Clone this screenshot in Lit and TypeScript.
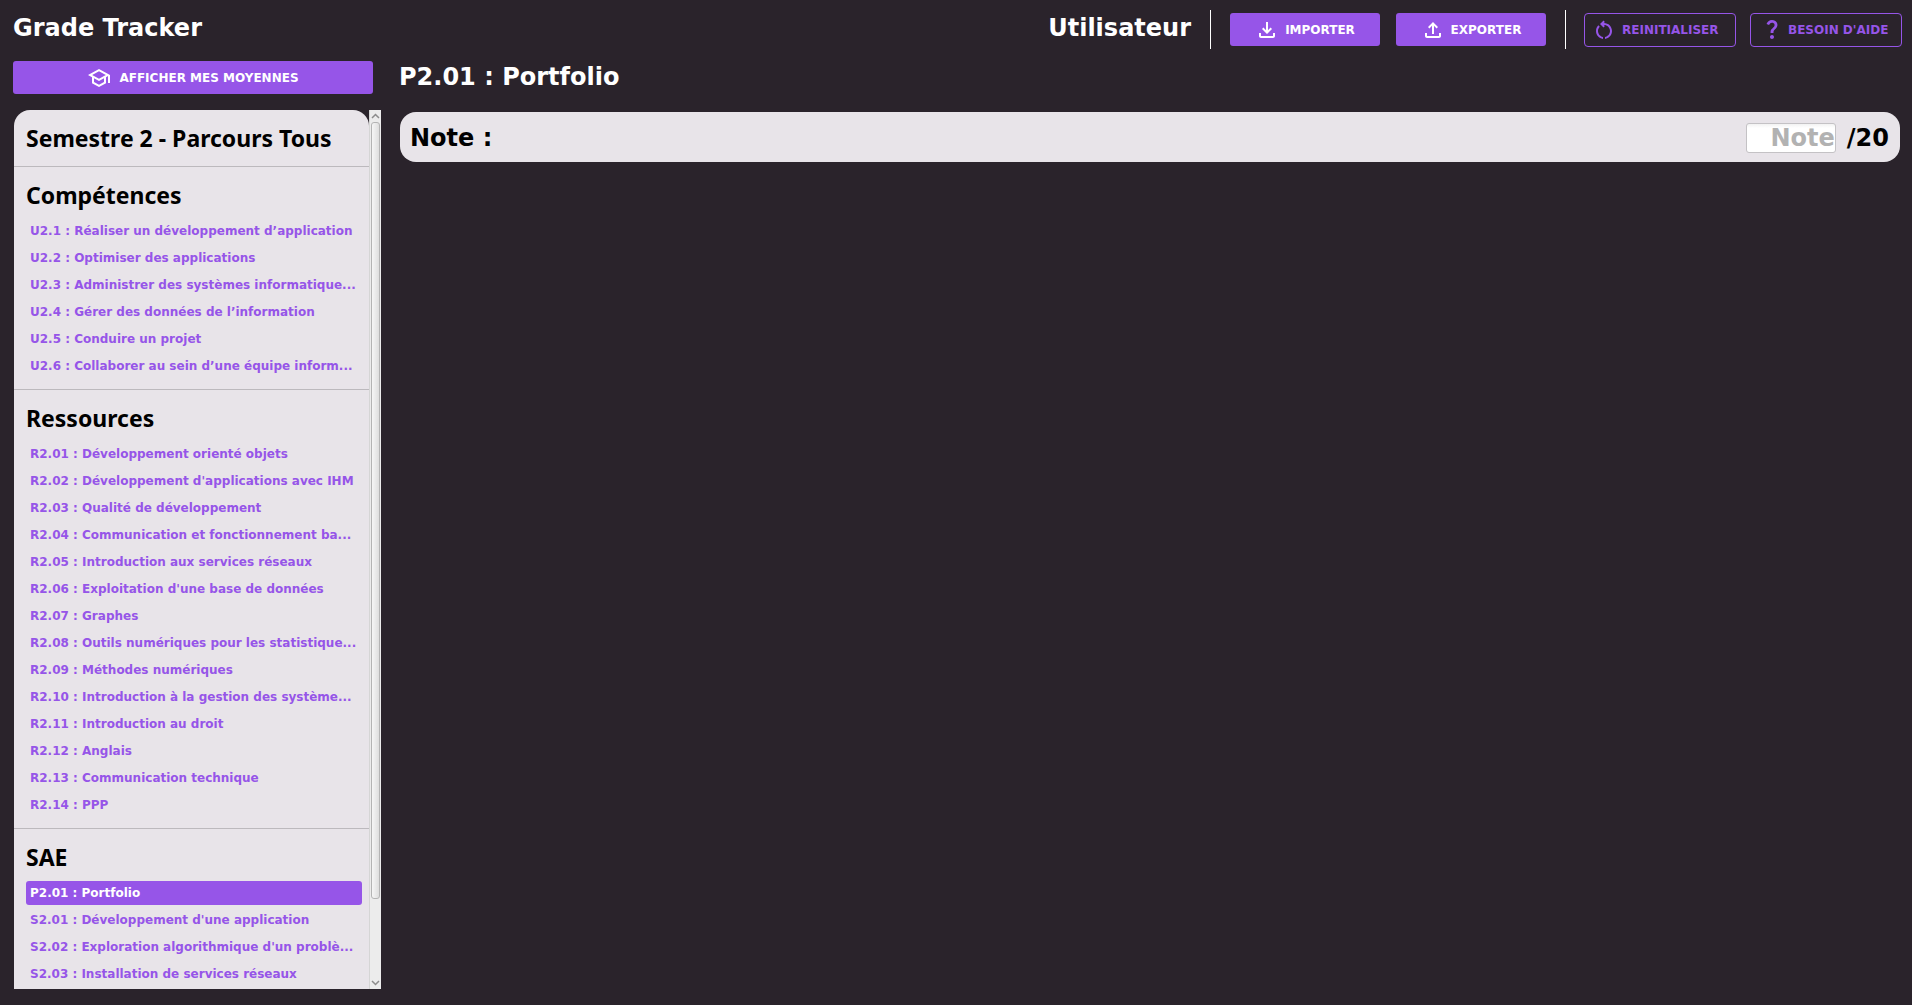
import { LitElement, html, css, svg, nothing } from "lit";
import { customElement, state } from "lit/decorators.js";
import { classMap } from "lit/directives/class-map.js";

type Course = { code: string; name: string };
type Section = { title: string; items: Course[] };

const course = (code: string, name: string): Course => ({ code, name });

const SECTIONS: Section[] = [
  {
    title: "Compétences",
    items: [
      course("U2.1", "Réaliser un développement d’application"),
      course("U2.2", "Optimiser des applications"),
      course("U2.3", "Administrer des systèmes informatique..."),
      course("U2.4", "Gérer des données de l’information"),
      course("U2.5", "Conduire un projet"),
      course("U2.6", "Collaborer au sein d’une équipe inform..."),
    ],
  },
  {
    title: "Ressources",
    items: [
      course("R2.01", "Développement orienté objets"),
      course("R2.02", "Développement d'applications avec IHM"),
      course("R2.03", "Qualité de développement"),
      course("R2.04", "Communication et fonctionnement ba..."),
      course("R2.05", "Introduction aux services réseaux"),
      course("R2.06", "Exploitation d'une base de données"),
      course("R2.07", "Graphes"),
      course("R2.08", "Outils numériques pour les statistique..."),
      course("R2.09", "Méthodes numériques"),
      course("R2.10", "Introduction à la gestion des système..."),
      course("R2.11", "Introduction au droit"),
      course("R2.12", "Anglais"),
      course("R2.13", "Communication technique"),
      course("R2.14", "PPP"),
    ],
  },
  {
    title: "SAE",
    items: [
      course("P2.01", "Portfolio"),
      course("S2.01", "Développement d'une application"),
      course("S2.02", "Exploration algorithmique d'un problè..."),
      course("S2.03", "Installation de services réseaux"),
    ],
  },
];

/* Each icon is drawn on a 24-unit grid. */
const ICONS = {
  school: svg`<path d="M12 3 1 9l4 2.18v6L12 21l7-3.82v-6l2-1.09V17h2V9L12 3zm6.82 6L12 12.72 5.18 9 12 5.28 18.82 9zM17 15.99l-5 2.73-5-2.73v-3.72L12 15l5-2.73v3.72z"/>`,
  download: svg`<path d="M18 15v3H6v-3H4v3c0 1.1.9 2 2 2h12c1.1 0 2-.9 2-2v-3h-2zm-1-4-1.41-1.41L13 12.17V4h-2v8.17L8.41 9.59 7 11l5 5 5-5z"/>`,
  upload: svg`<path d="M18 15v3H6v-3H4v3c0 1.1.9 2 2 2h12c1.1 0 2-.9 2-2v-3h-2zM7 9l1.41 1.41L11 7.83V16h2V7.83l2.59 2.58L17 9l-5-5-5 5z"/>`,
  restart: svg`<path d="M6 13c0-1.65.67-3.15 1.76-4.24L6.34 7.34C4.9 8.79 4 10.79 4 13c0 4.08 3.05 7.44 7 7.93v-2.02c-2.83-.48-5-2.94-5-5.91zm14 0c0-4.42-3.58-8-8-8-.06 0-.12.01-.18.01l1.09-1.09L11.5 2.5 8 6l3.5 3.5 1.41-1.41-1.08-1.08c.06 0 .12-.01.17-.01 3.31 0 6 2.69 6 6 0 2.97-2.17 5.43-5 5.91v2.02c3.95-.49 7-3.85 7-7.93z"/>`,
  question: svg`<path transform="translate(2 -1)" d="M11.07 12.85c.77-1.39 2.25-2.21 3.11-3.44.91-1.29.4-3.7-2.18-3.7-1.69 0-2.52 1.28-2.87 2.34L6.54 6.96C7.25 4.83 9.18 3 11.99 3c2.35 0 3.96 1.07 4.78 2.41.7 1.15 1.11 3.3.03 4.9-1.2 1.77-2.35 2.31-2.97 3.45-.25.46-.35.76-.35 2.24h-2.89c-.01-.78-.13-2.05.48-3.15zM14 20c0 1.1-.9 2-2 2s-2-.9-2-2 .9-2 2-2 2 .9 2 2z"/>`,
};

const icon = (name: keyof typeof ICONS) =>
  html`<svg class="icon" viewBox="0 0 24 24" aria-hidden="true">${ICONS[name]}</svg>`;

@customElement("app-root")
export class AppRoot extends LitElement {
  static styles = css`
    :host {
      --bg: #2a232b;
      --panel: #e8e4e9;
      --accent: #9655e8;
      display: grid;
      grid-template: auto minmax(0, 1fr) / 368px minmax(0, 1fr);
      column-gap: 18px;
      height: 100vh;
      box-sizing: border-box;
      padding: 10px 10px 16px 13px;
      background: var(--bg);
      color: #fff;
      font: bold 12px/16px "DejaVu Sans", Verdana, sans-serif;
    }
    * {
      box-sizing: border-box;
    }
    h1,
    h2,
    h3,
    p,
    ul {
      margin: 0;
      padding: 0;
    }
    button,
    input {
      margin: 0;
      font: inherit;
    }
    button {
      cursor: pointer;
    }
    .big {
      font-size: 24px;
      line-height: 36px;
    }
    .topbar {
      grid-column: 1 / -1;
      display: flex;
      align-items: center;
      justify-content: space-between;
    }
    .topbar .big {
      padding-bottom: 3px;
    }
    .actions {
      display: flex;
      align-items: center;
      gap: 14px;
    }
    .group {
      display: flex;
      align-items: center;
      gap: 16px;
      padding-left: 5px;
    }
    .group.secondary {
      gap: 14px;
      padding-left: 4px;
    }
    .rule {
      width: 1px;
      height: 39px;
      margin-left: 5px;
      background: #fff;
    }
    .btn {
      display: flex;
      align-items: center;
      justify-content: center;
      gap: 6px;
      width: 150px;
      height: 33px;
      padding: 0;
      border: 0;
      border-radius: 3px;
      background: var(--accent);
      color: #fff;
      white-space: nowrap;
    }
    .btn.outline {
      justify-content: flex-start;
      width: 152px;
      height: 34px;
      padding-left: 7px;
      border: 1px solid var(--accent);
      border-radius: 4px;
      background: transparent;
      color: var(--accent);
    }
    .btn.wide {
      gap: 8px;
      width: auto;
      margin-right: 8px;
    }
    .icon {
      flex: none;
      width: 24px;
      height: 24px;
      fill: currentColor;
    }
    .side {
      display: flex;
      flex-direction: column;
      gap: 16px;
      min-height: 0;
      padding-top: 12px;
    }
    .scroller {
      flex: 1;
      display: flex;
      min-height: 0;
      margin-left: 1px;
    }
    .list {
      flex: 1;
      min-width: 0;
      overflow: hidden;
      border-radius: 16px 16px 0 0;
      background: var(--panel);
      color: #000;
    }
    .section {
      padding: 12px 7px 11px 12px;
    }
    .section + .section {
      border-top: 1px solid #bcb9bd;
    }
    .heading {
      padding-bottom: 7px;
      font: bold 23px/33px "Noto Sans", "Segoe UI", sans-serif;
    }
    .items {
      display: grid;
      gap: 3px;
      list-style: none;
    }
    .item {
      display: block;
      width: 100%;
      height: 24px;
      padding: 0 4px;
      border: 0;
      border-radius: 3px;
      background: transparent;
      color: var(--accent);
      text-align: left;
      white-space: nowrap;
    }
    .item.selected {
      background: var(--accent);
      color: #fff;
    }
    .semester {
      font: bold 23px/33px "Noto Sans", "Segoe UI", sans-serif;
    }
    .bar {
      display: flex;
      flex-direction: column;
      width: 12px;
      border-left: 1px solid #d5d5d5;
      background: #ececec;
    }
    .arrow {
      display: flex;
      align-items: center;
      justify-content: center;
      height: 12px;
      padding: 0;
      border: 0;
      background: transparent;
    }
    .arrow svg {
      width: 9px;
      height: 6px;
      fill: none;
      stroke: #8c8c8c;
      stroke-width: 1.5;
    }
    .thumb {
      flex: 777;
      margin: 0 1px;
      border: 1px solid #b4b4b4;
      border-radius: 3px;
      background: linear-gradient(to right, #f6f6f6, #dedede);
    }
    .rest {
      flex: 78;
    }
    .main {
      display: grid;
      align-content: start;
      gap: 17px;
      padding: 10px 2px 0 0;
    }
    .card {
      display: flex;
      align-items: center;
      justify-content: space-between;
      height: 50px;
      margin-left: 1px;
      padding: 1px 11px 0 10px;
      border-radius: 16px;
      background: var(--panel);
      color: #000;
    }
    .grade {
      display: flex;
      align-items: center;
      gap: 11px;
    }
    .field {
      width: 90px;
      height: 30px;
      padding: 0;
      border: 1px solid #c4c2c5;
      border-radius: 3px;
      background: linear-gradient(#f2f2f2, #fff 4px);
      color: #000;
      text-align: right;
    }
    .field::placeholder {
      color: #b2b2b2;
      opacity: 1;
    }
  `;

  @state() private selected = SECTIONS[2].items[0];

  private renderItem(item: Course) {
    const current = item === this.selected;
    return html`<li>
      <button
        class=${classMap({ item: true, selected: current })}
        aria-current=${current ? "page" : nothing}
        @click=${() => (this.selected = item)}
      >${item.code} : ${item.name}</button>
    </li>`;
  }

  private renderSection(section: Section) {
    return html`<section class="section">
      <h3 class="heading">${section.title}</h3>
      <ul class="items">${section.items.map((item) => this.renderItem(item))}</ul>
    </section>`;
  }

  render() {
    return html`
      <header class="topbar">
        <h1 class="big">Grade Tracker</h1>
        <div class="actions">
          <p class="big">Utilisateur</p>
          <span class="rule"></span>
          <div class="group">
            <button class="btn">${icon("download")}IMPORTER</button>
            <button class="btn">${icon("upload")}EXPORTER</button>
          </div>
          <span class="rule"></span>
          <div class="group secondary">
            <button class="btn outline">${icon("restart")}REINITIALISER</button>
            <button class="btn outline">${icon("question")}BESOIN D'AIDE</button>
          </div>
        </div>
      </header>
      <nav class="side">
        <button class="btn wide">${icon("school")}AFFICHER MES MOYENNES</button>
        <div class="scroller">
          <div class="list">
            <div class="section"><h2 class="semester">Semestre 2 - Parcours Tous</h2></div>
            ${SECTIONS.map((section) => this.renderSection(section))}
          </div>
          <div class="bar">
            <button class="arrow" aria-label="Haut"><svg viewBox="0 0 9 6"><path d="M1 5l3.5-3.5L8 5"/></svg></button>
            <div class="thumb"></div>
            <div class="rest"></div>
            <button class="arrow" aria-label="Bas"><svg viewBox="0 0 9 6"><path d="M1 1l3.5 3.5L8 1"/></svg></button>
          </div>
        </div>
      </nav>
      <main class="main">
        <h2 class="big">${this.selected.code} : ${this.selected.name}</h2>
        <div class="card big">
          <label for="note">Note :</label>
          <div class="grade">
            <input id="note" class="field" type="text" inputmode="decimal" placeholder="Note" />
            <span>/20</span>
          </div>
        </div>
      </main>
    `;
  }
}
